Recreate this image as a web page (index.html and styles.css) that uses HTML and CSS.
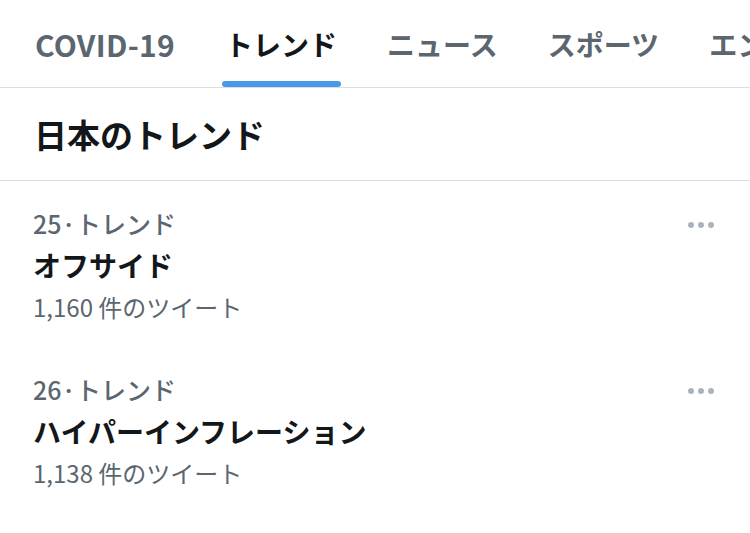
FILE: index.html
```html
<!DOCTYPE html>
<html lang="ja">
  <head>
    <meta charset="UTF-8" />
    <meta name="viewport" content="width=device-width, initial-scale=1.0" />
    <title>トレンド</title>
    <link rel="stylesheet" href="styles.css">
  </head>
  <body>
    <nav class="tabs">
      <div class="tab latin">COVID-19</div>
      <div class="tab active"><span>トレンド</span></div>
      <div class="tab">ニュース</div>
      <div class="tab">スポーツ</div>
      <div class="tab">エンタメ</div>
    </nav>
    <h2 class="title">日本のトレンド</h2>
    <div class="list">
      <div class="trend">
        <div class="info">
          <div class="meta">25<span class="dot">·</span>トレンド</div>
          <div class="name">オフサイド</div>
          <div class="count">1,160 件のツイート</div>
        </div>
        <svg class="more" width="28" height="42" viewBox="0 0 28 42">
          <circle cx="4" cy="21" r="3" />
          <circle cx="14" cy="21" r="3" />
          <circle cx="24" cy="21" r="3" />
        </svg>
      </div>
      <div class="trend">
        <div class="info">
          <div class="meta">26<span class="dot">·</span>トレンド</div>
          <div class="name">ハイパーインフレーション</div>
          <div class="count">1,138 件のツイート</div>
        </div>
        <svg class="more" width="28" height="42" viewBox="0 0 28 42">
          <circle cx="4" cy="21" r="3" />
          <circle cx="14" cy="21" r="3" />
          <circle cx="24" cy="21" r="3" />
        </svg>
      </div>
    </div>
  </body>
</html>
```

FILE: styles.css
```css
* {
  padding: 0;
  margin: 0;
  box-sizing: border-box;
}
body {
  background: #fff;
  font-family: "Noto Sans CJK JP", "Noto Sans", sans-serif;
  color: #14171a;
  overflow: hidden;
}
.tabs {
  display: flex;
  height: 88px;
  padding-left: 10px;
  border-bottom: 1px solid #dcdfe2;
  white-space: nowrap;
  overflow: hidden;
}
.tab {
  position: relative;
  display: flex;
  align-items: center;
  padding: 0 25px;
  font-size: 28px;
  font-weight: 700;
  color: #5b6670;
  flex-shrink: 0;
}
.tab.latin {
  font-size: 30px;
  letter-spacing: 0.3px;
}
.tab.active {
  color: #14171a;
}
.tab.active span::after {
  content: "";
  position: absolute;
  left: 22px;
  right: 21px;
  bottom: 0;
  height: 6px;
  border-radius: 3px;
  background: #4a99e9;
}
.title {
  height: 93px;
  padding-left: 34px;
  display: flex;
  align-items: center;
  font-size: 33px;
  font-weight: 700;
  border-bottom: 1px solid #dcdfe2;
}
.trend {
  display: flex;
  justify-content: space-between;
  align-items: flex-start;
  padding: 21px 35px 19px 33px;
}
.meta {
  font-size: 25px;
  line-height: 42px;
  color: #5b6670;
  font-weight: 500;
}
.name {
  font-size: 28px;
  line-height: 42px;
  font-weight: 700;
}
.count {
  font-size: 24px;
  line-height: 42px;
  color: #5b6670;
}
.more {
  fill: #aab4be;
  margin-top: 2px;
}
```
